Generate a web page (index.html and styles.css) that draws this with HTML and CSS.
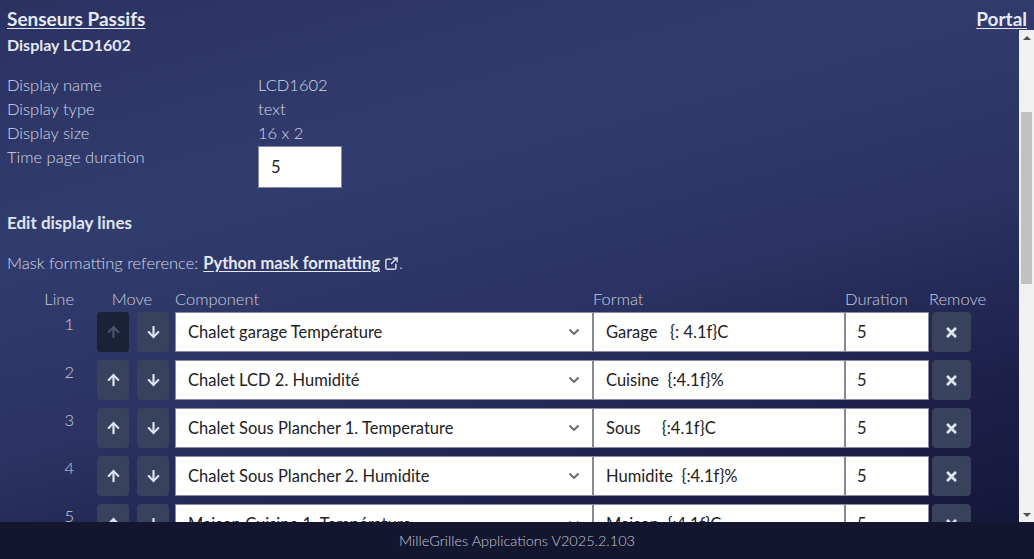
FILE: index.html
```html
<!DOCTYPE html>
<html lang="fr">
<head>
<meta charset="utf-8">
<title>Senseurs Passifs</title>
<link rel="stylesheet" href="styles.css">
</head>
<body>
<header class="topbar">
  <a class="toplink" href="#">Senseurs Passifs</a>
  <a class="toplink" href="#">Portal</a>
</header>
<div class="scroll-area">
<main class="content">
  <h2 class="title">Display LCD1602</h2>
  <div class="info">
    <div class="label">Display name</div><div class="value">LCD1602</div>
    <div class="label">Display type</div><div class="value">text</div>
    <div class="label">Display size</div><div class="value">16 x 2</div>
    <div class="label">Time page duration</div><div class="value"><input class="field page-duration" value="5"></div>
  </div>
  <h3 class="subtitle">Edit display lines</h3>
  <p class="mask">Mask formatting reference: <a class="reflink" href="#">Python mask formatting</a><svg class="ext" viewBox="0 0 24 24" width="15" height="15"><path d="M15 3h6v6M21 3l-9 9M19 13v6a2 2 0 0 1-2 2H5a2 2 0 0 1-2-2V7a2 2 0 0 1 2-2h6" fill="none" stroke="currentColor" stroke-width="2.4" stroke-linecap="round" stroke-linejoin="round"/></svg>.</p>

  <div class="lines">
    <div class="h h-line">Line</div>
    <div class="h h-move">Move</div>
    <div class="h">Component</div>
    <div class="h">Format</div>
    <div class="h">Duration</div>
    <div class="h">Remove</div>

    <div class="num">1</div>
    <div class="move"><button class="btn disabled"><svg class="arrow" viewBox="0 0 448 512"><path d="M34.9 289.5l-22.2-22.2c-9.4-9.4-9.4-24.6 0-33.9L207 39c9.4-9.4 24.6-9.4 33.9 0l194.3 194.3c9.4 9.4 9.4 24.6 0 33.9L413 289.4c-9.5 9.5-25 9.3-34.3-.4L264 168.6V456c0 13.3-10.7 24-24 24h-32c-13.3 0-24-10.7-24-24V168.6L69.2 289.1c-9.3 9.8-24.8 10-34.3.4z"/></svg></button><button class="btn"><svg class="arrow down" viewBox="0 0 448 512"><path d="M34.9 289.5l-22.2-22.2c-9.4-9.4-9.4-24.6 0-33.9L207 39c9.4-9.4 24.6-9.4 33.9 0l194.3 194.3c9.4 9.4 9.4 24.6 0 33.9L413 289.4c-9.5 9.5-25 9.3-34.3-.4L264 168.6V456c0 13.3-10.7 24-24 24h-32c-13.3 0-24-10.7-24-24V168.6L69.2 289.1c-9.3 9.8-24.8 10-34.3.4z"/></svg></button></div>
    <div class="select"><span>Chalet garage Température</span><svg class="chev" viewBox="0 0 12 8"><path d="M1.5 1.5l4.5 4.5 4.5-4.5" fill="none" stroke="currentColor" stroke-width="1.8"/></svg></div>
    <input class="field fmt" value="Garage   {: 4.1f}C">
    <input class="field dur" value="5">
    <div class="rm"><button class="btn x"><svg class="times" viewBox="0 0 352 512"><path d="M242.72 256l100.07-100.07c12.28-12.28 12.28-32.19 0-44.48l-22.24-22.24c-12.28-12.28-32.19-12.28-44.48 0L176 189.28 75.93 89.21c-12.28-12.28-32.19-12.28-44.48 0L9.21 111.45c-12.28 12.28-12.28 32.19 0 44.48L109.28 256 9.21 356.07c-12.28 12.28-12.28 32.19 0 44.48l22.24 22.24c12.28 12.28 32.2 12.28 44.48 0L176 322.72l100.07 100.07c12.28 12.28 32.2 12.28 44.48 0l22.24-22.24c12.28-12.28 12.28-32.19 0-44.48L242.72 256z"/></svg></button></div>

    <div class="num">2</div>
    <div class="move"><button class="btn"><svg class="arrow" viewBox="0 0 448 512"><path d="M34.9 289.5l-22.2-22.2c-9.4-9.4-9.4-24.6 0-33.9L207 39c9.4-9.4 24.6-9.4 33.9 0l194.3 194.3c9.4 9.4 9.4 24.6 0 33.9L413 289.4c-9.5 9.5-25 9.3-34.3-.4L264 168.6V456c0 13.3-10.7 24-24 24h-32c-13.3 0-24-10.7-24-24V168.6L69.2 289.1c-9.3 9.8-24.8 10-34.3.4z"/></svg></button><button class="btn"><svg class="arrow down" viewBox="0 0 448 512"><path d="M34.9 289.5l-22.2-22.2c-9.4-9.4-9.4-24.6 0-33.9L207 39c9.4-9.4 24.6-9.4 33.9 0l194.3 194.3c9.4 9.4 9.4 24.6 0 33.9L413 289.4c-9.5 9.5-25 9.3-34.3-.4L264 168.6V456c0 13.3-10.7 24-24 24h-32c-13.3 0-24-10.7-24-24V168.6L69.2 289.1c-9.3 9.8-24.8 10-34.3.4z"/></svg></button></div>
    <div class="select"><span>Chalet LCD 2. Humidité</span><svg class="chev" viewBox="0 0 12 8"><path d="M1.5 1.5l4.5 4.5 4.5-4.5" fill="none" stroke="currentColor" stroke-width="1.8"/></svg></div>
    <input class="field fmt" value="Cuisine  {:4.1f}%">
    <input class="field dur" value="5">
    <div class="rm"><button class="btn x"><svg class="times" viewBox="0 0 352 512"><path d="M242.72 256l100.07-100.07c12.28-12.28 12.28-32.19 0-44.48l-22.24-22.24c-12.28-12.28-32.19-12.28-44.48 0L176 189.28 75.93 89.21c-12.28-12.28-32.19-12.28-44.48 0L9.21 111.45c-12.28 12.28-12.28 32.19 0 44.48L109.28 256 9.21 356.07c-12.28 12.28-12.28 32.19 0 44.48l22.24 22.24c12.28 12.28 32.2 12.28 44.48 0L176 322.72l100.07 100.07c12.28 12.28 32.2 12.28 44.48 0l22.24-22.24c12.28-12.28 12.28-32.19 0-44.48L242.72 256z"/></svg></button></div>

    <div class="num">3</div>
    <div class="move"><button class="btn"><svg class="arrow" viewBox="0 0 448 512"><path d="M34.9 289.5l-22.2-22.2c-9.4-9.4-9.4-24.6 0-33.9L207 39c9.4-9.4 24.6-9.4 33.9 0l194.3 194.3c9.4 9.4 9.4 24.6 0 33.9L413 289.4c-9.5 9.5-25 9.3-34.3-.4L264 168.6V456c0 13.3-10.7 24-24 24h-32c-13.3 0-24-10.7-24-24V168.6L69.2 289.1c-9.3 9.8-24.8 10-34.3.4z"/></svg></button><button class="btn"><svg class="arrow down" viewBox="0 0 448 512"><path d="M34.9 289.5l-22.2-22.2c-9.4-9.4-9.4-24.6 0-33.9L207 39c9.4-9.4 24.6-9.4 33.9 0l194.3 194.3c9.4 9.4 9.4 24.6 0 33.9L413 289.4c-9.5 9.5-25 9.3-34.3-.4L264 168.6V456c0 13.3-10.7 24-24 24h-32c-13.3 0-24-10.7-24-24V168.6L69.2 289.1c-9.3 9.8-24.8 10-34.3.4z"/></svg></button></div>
    <div class="select"><span>Chalet Sous Plancher 1. Temperature</span><svg class="chev" viewBox="0 0 12 8"><path d="M1.5 1.5l4.5 4.5 4.5-4.5" fill="none" stroke="currentColor" stroke-width="1.8"/></svg></div>
    <input class="field fmt" value="Sous     {:4.1f}C">
    <input class="field dur" value="5">
    <div class="rm"><button class="btn x"><svg class="times" viewBox="0 0 352 512"><path d="M242.72 256l100.07-100.07c12.28-12.28 12.28-32.19 0-44.48l-22.24-22.24c-12.28-12.28-32.19-12.28-44.48 0L176 189.28 75.93 89.21c-12.28-12.28-32.19-12.28-44.48 0L9.21 111.45c-12.28 12.28-12.28 32.19 0 44.48L109.28 256 9.21 356.07c-12.28 12.28-12.28 32.19 0 44.48l22.24 22.24c12.28 12.28 32.2 12.28 44.48 0L176 322.72l100.07 100.07c12.28 12.28 32.2 12.28 44.48 0l22.24-22.24c12.28-12.28 12.28-32.19 0-44.48L242.72 256z"/></svg></button></div>

    <div class="num">4</div>
    <div class="move"><button class="btn"><svg class="arrow" viewBox="0 0 448 512"><path d="M34.9 289.5l-22.2-22.2c-9.4-9.4-9.4-24.6 0-33.9L207 39c9.4-9.4 24.6-9.4 33.9 0l194.3 194.3c9.4 9.4 9.4 24.6 0 33.9L413 289.4c-9.5 9.5-25 9.3-34.3-.4L264 168.6V456c0 13.3-10.7 24-24 24h-32c-13.3 0-24-10.7-24-24V168.6L69.2 289.1c-9.3 9.8-24.8 10-34.3.4z"/></svg></button><button class="btn"><svg class="arrow down" viewBox="0 0 448 512"><path d="M34.9 289.5l-22.2-22.2c-9.4-9.4-9.4-24.6 0-33.9L207 39c9.4-9.4 24.6-9.4 33.9 0l194.3 194.3c9.4 9.4 9.4 24.6 0 33.9L413 289.4c-9.5 9.5-25 9.3-34.3-.4L264 168.6V456c0 13.3-10.7 24-24 24h-32c-13.3 0-24-10.7-24-24V168.6L69.2 289.1c-9.3 9.8-24.8 10-34.3.4z"/></svg></button></div>
    <div class="select"><span>Chalet Sous Plancher 2. Humidite</span><svg class="chev" viewBox="0 0 12 8"><path d="M1.5 1.5l4.5 4.5 4.5-4.5" fill="none" stroke="currentColor" stroke-width="1.8"/></svg></div>
    <input class="field fmt" value="Humidite  {:4.1f}%">
    <input class="field dur" value="5">
    <div class="rm"><button class="btn x"><svg class="times" viewBox="0 0 352 512"><path d="M242.72 256l100.07-100.07c12.28-12.28 12.28-32.19 0-44.48l-22.24-22.24c-12.28-12.28-32.19-12.28-44.48 0L176 189.28 75.93 89.21c-12.28-12.28-32.19-12.28-44.48 0L9.21 111.45c-12.28 12.28-12.28 32.19 0 44.48L109.28 256 9.21 356.07c-12.28 12.28-12.28 32.19 0 44.48l22.24 22.24c12.28 12.28 32.2 12.28 44.48 0L176 322.72l100.07 100.07c12.28 12.28 32.2 12.28 44.48 0l22.24-22.24c12.28-12.28 12.28-32.19 0-44.48L242.72 256z"/></svg></button></div>

    <div class="num">5</div>
    <div class="move"><button class="btn"><svg class="arrow" viewBox="0 0 448 512"><path d="M34.9 289.5l-22.2-22.2c-9.4-9.4-9.4-24.6 0-33.9L207 39c9.4-9.4 24.6-9.4 33.9 0l194.3 194.3c9.4 9.4 9.4 24.6 0 33.9L413 289.4c-9.5 9.5-25 9.3-34.3-.4L264 168.6V456c0 13.3-10.7 24-24 24h-32c-13.3 0-24-10.7-24-24V168.6L69.2 289.1c-9.3 9.8-24.8 10-34.3.4z"/></svg></button><button class="btn"><svg class="arrow down" viewBox="0 0 448 512"><path d="M34.9 289.5l-22.2-22.2c-9.4-9.4-9.4-24.6 0-33.9L207 39c9.4-9.4 24.6-9.4 33.9 0l194.3 194.3c9.4 9.4 9.4 24.6 0 33.9L413 289.4c-9.5 9.5-25 9.3-34.3-.4L264 168.6V456c0 13.3-10.7 24-24 24h-32c-13.3 0-24-10.7-24-24V168.6L69.2 289.1c-9.3 9.8-24.8 10-34.3.4z"/></svg></button></div>
    <div class="select"><span>Maison Cuisine 1. Température</span><svg class="chev" viewBox="0 0 12 8"><path d="M1.5 1.5l4.5 4.5 4.5-4.5" fill="none" stroke="currentColor" stroke-width="1.8"/></svg></div>
    <input class="field fmt" value="Maison  {:4.1f}C">
    <input class="field dur" value="5">
    <div class="rm"><button class="btn x"><svg class="times" viewBox="0 0 352 512"><path d="M242.72 256l100.07-100.07c12.28-12.28 12.28-32.19 0-44.48l-22.24-22.24c-12.28-12.28-32.19-12.28-44.48 0L176 189.28 75.93 89.21c-12.28-12.28-32.19-12.28-44.48 0L9.21 111.45c-12.28 12.28-12.28 32.19 0 44.48L109.28 256 9.21 356.07c-12.28 12.28-12.28 32.19 0 44.48l22.24 22.24c12.28 12.28 32.2 12.28 44.48 0L176 322.72l100.07 100.07c12.28 12.28 32.2 12.28 44.48 0l22.24-22.24c12.28-12.28 12.28-32.19 0-44.48L242.72 256z"/></svg></button></div>
  </div>
</main>
<div class="scrollbar">
  <div class="sb-btn"><span class="tri up"></span></div>
  <div class="sb-track"><div class="sb-thumb"></div></div>
  <div class="sb-btn"><span class="tri down"></span></div>
</div>
</div>
<footer class="footer">MilleGrilles Applications V2025.2.103</footer>
</body>
</html>
```
FILE: styles.css
```css
html, body {
  margin: 0;
  height: 100%;
}
body {
  display: flex;
  flex-direction: column;
  font-family: Lato, "Open Sans", sans-serif;
  font-size: 16.5px;
  color: #d4d8e4;
  background: linear-gradient(165deg, #2a3262 0%, #313c6e 30%, #2a3363 55%, #1d1f48 78%, #131535 100%);
  overflow: hidden;
}
.topbar {
  height: 30px;
  display: flex;
  justify-content: space-between;
  align-items: flex-start;
  padding: 6px 7px 0;
  box-sizing: border-box;
  flex: none;
}
.toplink {
  color: #e6e9f2;
  font-weight: bold;
  font-size: 19px;
  line-height: 26px;
  text-decoration: underline;
  text-underline-offset: 2px;
}
.scroll-area {
  flex: 1;
  min-height: 0;
  display: flex;
}
.content {
  flex: 1;
  min-width: 0;
  overflow: hidden;
  padding: 0 7px;
}
.scrollbar {
  flex: none;
  width: 15px;
  background: #f1f1f1;
  display: flex;
  flex-direction: column;
}
.sb-btn {
  height: 15px;
  display: flex;
  align-items: center;
  justify-content: center;
}
.tri {
  width: 0;
  height: 0;
  border-left: 4px solid transparent;
  border-right: 4px solid transparent;
}
.tri.up {
  border-bottom: 4px solid #505050;
}
.tri.down {
  border-top: 4px solid #505050;
}
.sb-track {
  flex: 1;
  padding: 67px 2px 0;
}
.sb-thumb {
  height: 172px;
  background: #c1c1c1;
}
.title {
  margin: 0;
  font-size: 16px;
  font-weight: bold;
  line-height: 30px;
  color: #e4e7f0;
}
.info {
  margin-top: 13px;
  display: grid;
  grid-template-columns: 251px auto;
  line-height: 24px;
}
.label, .value {
  font-weight: 300;
}
.field {
  font-family: inherit;
  font-size: 16.5px;
  color: #222;
  background: #fff;
  border: 1px solid #888c98;
  border-radius: 0;
  box-sizing: border-box;
  outline: none;
  margin: 0;
}
.page-duration {
  width: 84px;
  height: 42px;
  padding: 0 12px;
  margin-top: 1px;
}
.subtitle {
  margin: 23px 0 0;
  font-size: 17px;
  font-weight: bold;
  line-height: 24px;
  color: #e0e3ee;
}
.mask {
  margin: 16px 0 0;
  line-height: 24px;
  font-weight: 300;
  display: flex;
  align-items: center;
}
.reflink {
  color: #e4e7f0;
  font-weight: bold;
  text-decoration: underline;
  text-underline-offset: 2px;
  margin-left: 5px;
}
.ext {
  margin-left: 4px;
  color: #d6dae6;
}
.lines {
  margin-top: 13px;
  display: grid;
  grid-template-columns: 82px 86px 418px 252px 84px 60px;
  grid-template-rows: 16px;
  grid-auto-rows: 40px;
  row-gap: 8px;
}
.h {
  font-weight: 300;
  color: #c9cedc;
  line-height: 24px;
  align-self: end;
  margin-bottom: -7px;
}
.h-line {
  text-align: right;
  padding-right: 15px;
}
.h-move {
  text-align: center;
}
.num {
  text-align: right;
  padding-right: 15px;
  line-height: 24px;
  font-weight: 300;
  color: #c9cedc;
}
.move {
  display: flex;
  gap: 8px;
  padding-left: 8px;
}
.btn {
  width: 32px;
  height: 40px;
  border: none;
  border-radius: 4px;
  background: #38425d;
  display: flex;
  align-items: center;
  justify-content: center;
  padding: 0;
  color: #dde4f0;
}
.btn.disabled {
  background: #1b2137;
  color: #4c566c;
}
.arrow {
  width: 13px;
  height: 14px;
  fill: currentColor;
}
.arrow.down {
  transform: rotate(180deg);
}
.select {
  background: #fff;
  border: 1px solid #888c98;
  box-sizing: border-box;
  display: flex;
  align-items: center;
  justify-content: space-between;
  padding: 0 12px;
  color: #222;
}
.chev {
  width: 12px;
  height: 8px;
  color: #666;
}
.fmt, .dur {
  height: 40px;
  width: 100%;
  padding: 0 12px;
}
.dur {
  padding-left: 11px;
}
.rm {
  padding-left: 3px;
}
.btn.x {
  width: 39px;
}
.times {
  width: 11px;
  height: 15px;
  fill: currentColor;
}
.footer {
  flex: none;
  height: 37px;
  background: #14152f;
  color: #c4c8d6;
  font-size: 14.5px;
  display: flex;
  align-items: center;
  justify-content: center;
  font-weight: 300;
}
```
